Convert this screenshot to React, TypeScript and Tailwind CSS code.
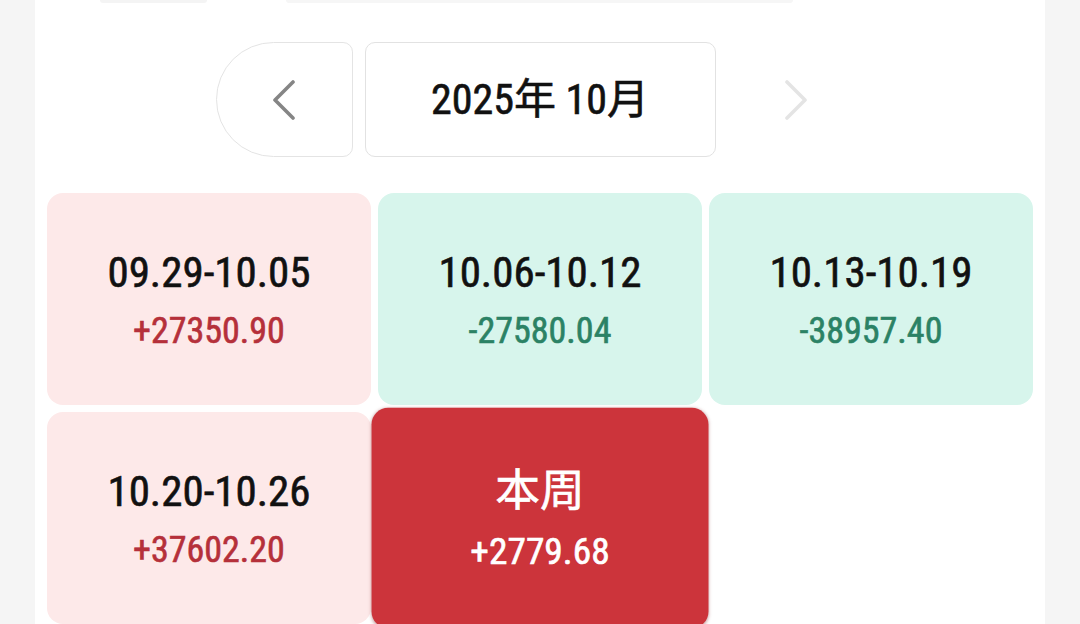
import React from 'react';

interface Week {
    label: string
    amount: string
    kind: 'up' | 'down' | 'current'
}

const weeks: Week[] = [
    { label: '09.29-10.05', amount: '+27350.90', kind: 'up' },
    { label: '10.06-10.12', amount: '-27580.04', kind: 'down' },
    { label: '10.13-10.19', amount: '-38957.40', kind: 'down' },
    { label: '10.20-10.26', amount: '+37602.20', kind: 'up' },
    { label: '本周', amount: '+2779.68', kind: 'current' },
];

const fontStack = "font-['Liberation_Sans_Narrow','Roboto_Condensed','DejaVu_Sans_Condensed',Roboto,'Noto_Sans_CJK_SC',sans-serif]";

// a bit heavier than regular, lighter than bold
const semi = '[-webkit-text-stroke:0.6px_currentColor]';

const Chevron = ({ dir, color }: { dir: 'left' | 'right', color: string }) => (
    <svg width="24" height="40" viewBox="0 0 24 40" fill="none" stroke={color} strokeWidth="3.6" strokeLinecap="round" strokeLinejoin="round">
        {dir === 'left' ? <path d="M21 2 L3 20 L21 38" /> : <path d="M3 2 L21 20 L3 38" />}
    </svg>
);

const WeekCard = ({ week }: { week: Week }) => {
    const bg = week.kind === 'up' ? 'bg-[#fde9e9]' : week.kind === 'down' ? 'bg-[#d7f5ec]' : 'bg-[#cc343b] scale-[1.04] shadow-[0_1px_3px_rgba(120,20,25,0.35)] z-10';
    const titleColor = week.kind === 'current' ? 'text-white' : 'text-[#111111]';
    const amountColor = week.kind === 'up' ? 'text-[#b5303a]' : week.kind === 'down' ? 'text-[#2b8265]' : 'text-white';
    return (
        <div className={`h-[212px] rounded-[16px] flex flex-col items-center justify-center ${bg}`}>
            <span className={`text-[43px] leading-[48px] ${semi} ${titleColor}`}>{week.label}</span>
            <span className={`text-[36px] leading-[40px] mt-[15px] ${semi} ${amountColor}`}>{week.amount}</span>
        </div>
    );
};

const App = () => {
    return (
        <div className={`min-h-screen bg-[#f5f5f5] flex justify-center ${fontStack}`}>
            <div className="w-[1010px] h-[624px] bg-white overflow-hidden">
                <div className="flex h-[3px]">
                    <div className="ml-[65px] w-[107px] bg-[#f4f4f4] rounded-b-[6px]" />
                    <div className="ml-[79px] w-[507px] bg-[#f6f6f6] rounded-b-[6px]" />
                </div>

                <div className="mt-[39px] flex justify-center gap-[12px]">
                    <button className="w-[137px] h-[115px] rounded-l-[58px] rounded-r-[10px] border border-[#e4e4e4] flex items-center justify-center">
                        <Chevron dir="left" color="#858585" />
                    </button>
                    <div className={`w-[351px] h-[115px] rounded-[10px] border border-[#e2e2e2] flex items-center justify-center text-[42px] text-[#111111] ${semi}`}>
                        2025年 10月
                    </div>
                    <button className="w-[137px] h-[115px] flex items-center justify-center">
                        <Chevron dir="right" color="#e4e4e4" />
                    </button>
                </div>

                <div className="mt-[36px] px-[12px] grid grid-cols-3 gap-[7px]">
                    {weeks.map((w) => (
                        <WeekCard key={w.label} week={w} />
                    ))}
                </div>
            </div>
        </div>
    );
};

export default App;
